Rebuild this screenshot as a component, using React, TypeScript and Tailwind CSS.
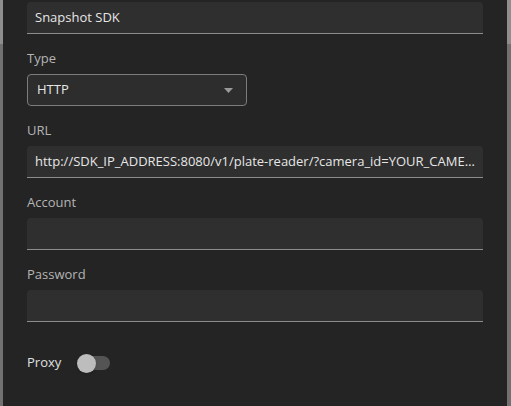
import { useState } from "react";

function Field({ label, value }: { label: string; value?: string }) {
  return (
    <div className="mt-[14px]">
      <div className="h-5 text-[13px] leading-5 text-[#b4b4b4]">{label}</div>
      <div className="mt-[6px] flex h-8 min-w-0 items-center rounded-t-[4px] border-b border-[#8c8c8c] bg-[#2f2f2f] px-2">
        <span className="min-w-0 truncate text-[13px] text-[#e6e6e6]">{value}</span>
      </div>
    </div>
  );
}

function Side({ w }: { w: string }) {
  return (
    <div className={`flex shrink-0 flex-col ${w}`}>
      <div className="h-[44px] bg-[#8e8e8e]" />
      <div className="flex-1 bg-[#717171]" />
    </div>
  );
}

export default function App() {
  const [proxy, setProxy] = useState(false);

  return (
    <div
      className="flex h-[406px] w-[511px] overflow-hidden bg-[#242424]"
      style={{ fontFamily: '"Open Sans", "Noto Sans", sans-serif' }}
    >
      <Side w="w-[3px]" />
      <div className="min-w-0 flex-1 px-6 pt-[2px]">
        <div className="flex h-8 items-center rounded-t-[4px] border-b border-[#8c8c8c] bg-[#2f2f2f] px-2">
          <span className="text-[13px] text-[#e6e6e6]">Snapshot SDK</span>
        </div>

        <div className="mt-[14px]">
          <div className="h-5 text-[13px] leading-5 text-[#b4b4b4]">Type</div>
          <div className="mt-[6px] flex h-8 w-[220px] items-center justify-between rounded-[4px] border border-[#7c7c7c] bg-[#2d2d2d] pl-[9px] pr-[13px]">
            <span className="text-[13px] text-[#e6e6e6]">HTTP</span>
            <svg width="9" height="5" viewBox="0 0 9 5">
              <path d="M0 0h9L4.5 5z" fill="#9a9a9a" />
            </svg>
          </div>
        </div>

        <Field label="URL" value="http://SDK_IP_ADDRESS:8080/v1/plate-reader/?camera_id=YOUR_CAMERA_ID&mmc=true" />
        <Field label="Account" />
        <Field label="Password" />

        <div className="mt-[31px] flex h-5 items-center">
          <span className="text-[13px] text-[#e0e0e0]">Proxy</span>
          <button
            onClick={() => setProxy(!proxy)}
            className="relative ml-[19px] h-[14px] w-[30px] rounded-full bg-[#545454]"
          >
            <span
              className={`absolute top-[-2.5px] h-[19px] w-[19px] rounded-full bg-[#bdbdbd] shadow ${proxy ? "left-[14px]" : "left-[-3px]"}`}
            />
          </button>
        </div>
      </div>
      <Side w="w-[4px]" />
    </div>
  );
}
